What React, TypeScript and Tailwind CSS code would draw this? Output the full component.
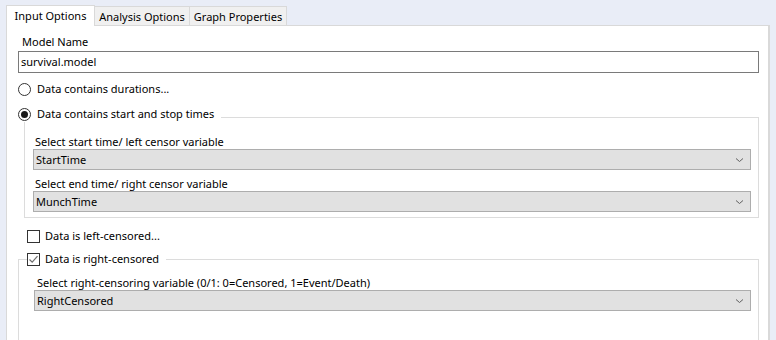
import React from "react";

const font = { fontFamily: '"Noto Sans", "Open Sans", sans-serif' };

function Chevron() {
  return (
    <svg width="9" height="6" viewBox="0 0 9 6" className="shrink-0">
      <path d="M1 1.5 L4.5 4.5 L8 1.5" fill="none" stroke="#606060" strokeWidth="1" />
    </svg>
  );
}

function Combo({ value, className }: { value: string; className: string }) {
  return (
    <div
      className={
        "h-[21px] flex items-center justify-between bg-[#e1e1e1] border border-[#adadad] pl-[2px] pr-[6px] text-[11px] leading-[15px] text-black " +
        className
      }
    >
      <span>{value}</span>
      <Chevron />
    </div>
  );
}

function Radio({ checked }: { checked?: boolean }) {
  return (
    <div className="w-[13px] h-[13px] rounded-full border border-[#333333] bg-white flex items-center justify-center shrink-0">
      {checked && <div className="w-[7px] h-[7px] rounded-full bg-[#1a1a1a]" />}
    </div>
  );
}

function Check({ checked }: { checked?: boolean }) {
  return (
    <div className="w-[13px] h-[13px] border border-[#333333] bg-white flex items-center justify-center shrink-0">
      {checked && (
        <svg width="11" height="11" viewBox="0 0 11 11">
          <path d="M1.5 5.5 L4.2 8.2 L9.5 2.2" fill="none" stroke="#6f6f6f" strokeWidth="1.2" />
        </svg>
      )}
    </div>
  );
}

export default function App() {
  return (
    <div className="w-[776px] h-[340px] overflow-hidden bg-[#e9edf7] text-black" style={font}>
      {/* Tabs */}
      <div className="flex items-end pl-[6px] pt-[4px] h-[25px] text-[11px] whitespace-nowrap">
        <div className="h-[21px] w-[89px] bg-white border border-b-0 border-[#d9d9d9] flex items-center justify-center leading-[15px] relative z-10 -mb-px pb-[2px]">
          Input Options
        </div>
        <div className="h-[19px] w-[95px] bg-[#f0f0f0] border border-l-0 border-b-0 border-[#d9d9d9] flex items-center justify-center leading-[15px]">
          Analysis Options
        </div>
        <div className="h-[19px] w-[97px] bg-[#f0f0f0] border border-l-0 border-b-0 border-[#d9d9d9] flex items-center justify-center leading-[15px]">
          Graph Properties
        </div>
      </div>

      {/* Panel */}
      <div className="ml-[6px] w-[764px] h-[330px] bg-white border border-[#d9d9d9] border-r-2 flex flex-col text-[11px]">
        <div className="mt-[8px] ml-[15px] leading-[16px]">Model Name</div>
        <div className="mt-[1px] ml-[11px] mr-[9px] h-[22px] border border-[#7a7a7a] flex items-center pl-[2px] leading-[16px]">
          survival.model
        </div>

        <div className="mt-[8px] ml-[11px] h-[16px] flex items-center gap-[6px] leading-[16px]">
          <Radio />
          <span>Data contains durations...</span>
        </div>

        {/* Group 1 header */}
        <div className="mt-[9px] ml-[11px] mr-[9px] h-[16px] flex items-center leading-[16px]">
          <Radio checked />
          <span className="ml-[6px]">Data contains start and stop times</span>
          <div className="flex-1 self-stretch mt-[11px] ml-[7px] border-t border-r border-[#dcdcdc]" />
        </div>
        <div className="ml-[17px] mr-[9px] border-l border-r border-b border-[#dcdcdc] pb-[5px] flex flex-col">
          <div className="mt-[12px] ml-[10px] leading-[15px]">Select start time/ left censor variable</div>
          <Combo value="StartTime" className="ml-[8px] mr-[7px]" />
          <div className="mt-[6px] ml-[10px] leading-[15px]">Select end time/ right censor variable</div>
          <Combo value="MunchTime" className="ml-[8px] mr-[7px]" />
        </div>

        <div className="mt-[10px] ml-[20px] h-[16px] flex items-center gap-[5px] leading-[16px]">
          <Check />
          <span>Data is left-censored...</span>
        </div>

        {/* Group 2 header */}
        <div className="mt-[7px] ml-[11px] mr-[9px] h-[16px] flex items-center leading-[16px]">
          <div className="w-[9px] self-stretch mt-[8px] border-t border-l border-[#dcdcdc]" />
          <Check checked />
          <span className="ml-[5px]">Data is right-censored</span>
          <div className="flex-1 self-stretch mt-[8px] ml-[7px] border-t border-r border-[#dcdcdc]" />
        </div>
        <div className="ml-[11px] mr-[9px] flex-1 border-l border-r border-[#dcdcdc] flex flex-col">
          <div className="mt-[8px] ml-[18px] leading-[15px]">
            Select right-censoring variable (0/1: 0=Censored, 1=Event/Death)
          </div>
          <Combo value="RightCensored" className="ml-[15px] mr-[7px]" />
        </div>
      </div>
    </div>
  );
}
